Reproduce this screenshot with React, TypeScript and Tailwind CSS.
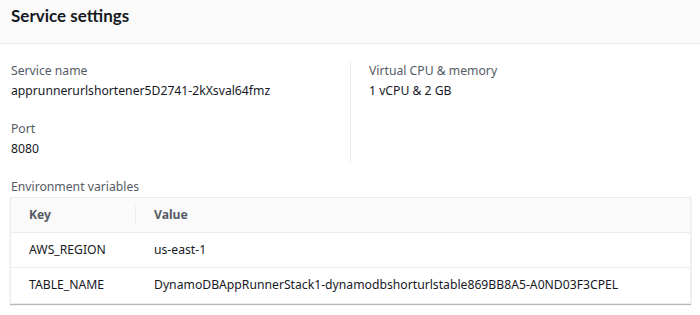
import React from "react";

const envVars = [
  { key: "AWS_REGION", value: "us-east-1" },
  { key: "TABLE_NAME", value: "DynamoDBAppRunnerStack1-dynamodbshorturlstable869BB8A5-A0ND03F3CPEL" },
];

const Field = ({ label, value }: { label: string; value: string }) => (
  <div className="flex flex-col">
    <span className="text-[12.2px] leading-[20px] text-[#545b64]">{label}</span>
    <span className="text-[12.2px] leading-[20px] text-[#16191f]">{value}</span>
  </div>
);

const App = () => {
  return (
    <div className="w-[700px] h-[315px] bg-white font-['Noto_Sans',sans-serif] overflow-hidden">
      <div className="h-[44px] bg-[#fafafa] border-b border-[#eaeded] px-[11px] pt-[6px]">
        <h2 className="font-['Lato',sans-serif] text-[17px] font-bold text-[#16191f] leading-[20px]">Service settings</h2>
      </div>
      <div className="px-[11px] pt-[17px]">
        <div className="flex">
          <div className="w-[340px] border-r border-[#eaeded] flex flex-col gap-[18px] pb-[4px]">
            <Field label="Service name" value="apprunnerurlshortener5D2741-2kXsval64fmz" />
            <Field label="Port" value="8080" />
          </div>
          <div className="pl-[18px]">
            <Field label="Virtual CPU & memory" value="1 vCPU & 2 GB" />
          </div>
        </div>
        <div className="mt-[14px] text-[12.2px] leading-[20px] text-[#545b64]">Environment variables</div>
        <div className="w-[681px] -ml-[1px] border border-[#eaeded] shadow-[0_1px_1px_rgba(0,28,36,0.3)]">
          <div className="h-[35px] bg-[#fafafa] border-b border-[#eaeded] flex items-center text-[12.2px] font-bold text-[#545b64]">
            <div className="w-[125px] pl-[18px] border-r border-[#eaeded] leading-[18px]">Key</div>
            <div className="pl-[18px]">Value</div>
          </div>
          {envVars.map((v, i) => (
            <div
              key={v.key}
              className={`h-[35px] flex items-center text-[12.2px] text-[#16191f] ${i === 0 ? "border-b border-[#eaeded]" : ""}`}
            >
              <div className="w-[125px] pl-[18px]">{v.key}</div>
              <div className="pl-[18px]">{v.value}</div>
            </div>
          ))}
        </div>
      </div>
    </div>
  );
};

export default App;
